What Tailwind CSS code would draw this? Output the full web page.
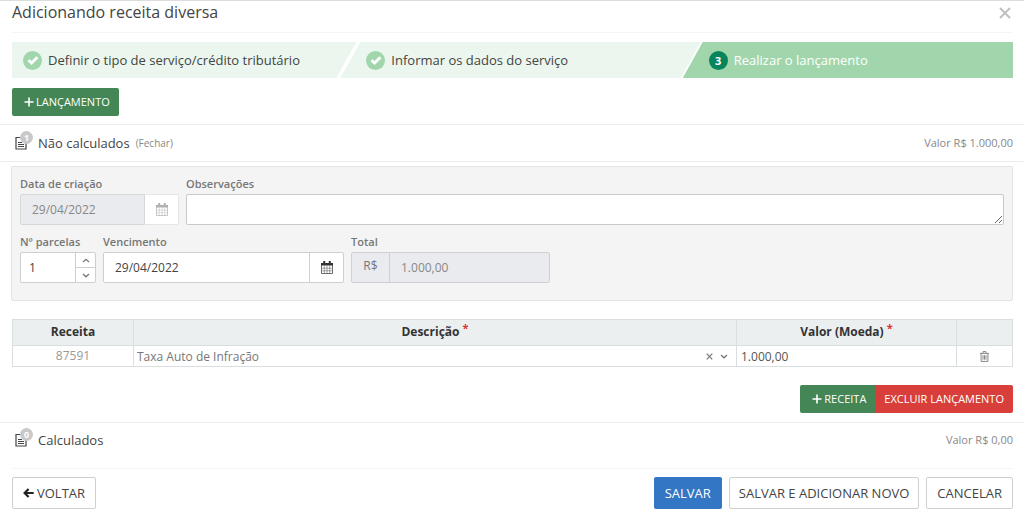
<!DOCTYPE html>
<html lang="pt-BR">
<head>
<meta charset="utf-8">
<meta name="viewport" content="width=device-width, initial-scale=1">
<title>Adicionando receita diversa</title>
<script src="https://cdn.jsdelivr.net/npm/@tailwindcss/browser@4"></script>
</head>
<body class="bg-white font-['Open_Sans',sans-serif] text-[13px] leading-5 text-[#444]">
<svg class="hidden" aria-hidden="true">
  <symbol id="check" viewBox="0 0 12 12"><path d="M1.5 6.2 4.6 9 10.4 3.2" fill="none" stroke="currentColor" stroke-width="3"/></symbol>
  <symbol id="plus" viewBox="0 0 10 10"><path d="M5 .5v9M.5 5h9" fill="none" stroke="currentColor" stroke-width="1.6"/></symbol>
  <symbol id="up" viewBox="0 0 8 5"><path d="M1 4 4 1.2 7 4" fill="none" stroke="currentColor" stroke-width="1.2"/></symbol>
  <symbol id="down" viewBox="0 0 8 5"><path d="M1 1 4 3.8 7 1" fill="none" stroke="currentColor" stroke-width="1.3"/></symbol>
  <symbol id="calendar" viewBox="0 0 12 13">
    <path d="M.5 3v9.5h11V3" fill="none" stroke="currentColor" stroke-width=".9" opacity=".8"/>
    <path d="M1 7.2h10M1 9.8h10M3.3 4.5v8M6 4.5v8M8.7 4.5v8" fill="none" stroke="currentColor" stroke-width=".7" opacity=".6"/>
    <path d="M0 2h12v2.4H0zM2.2 0h2v3h-2zM7.8 0h2v3h-2z" fill="currentColor"/>
  </symbol>
  <symbol id="doc" viewBox="0 0 12 14"><path d="M11 6.5V13H1V1.5h5" fill="none" stroke="currentColor" stroke-width="1.2"/><path d="M3 6.5h4M3 8.5h6M3 10.5h6" fill="none" stroke="currentColor"/></symbol>
</svg>
<main class="border-t border-[#dcdcdc]">
  <header class="mr-[11px] ml-3 flex h-[31px] items-start justify-between">
    <h1 class="text-base leading-[22px] text-[#444]">Adicionando receita diversa</h1>
    <button type="button" aria-label="Fechar janela" class="mt-[6px] mr-0.5 text-[#c0c0c0]"><svg class="size-3" viewBox="0 0 12 12"><path d="m1 1 10 10M11 1 1 11" stroke="currentColor" stroke-width="2"/></svg></button>
  </header>
  <ol class="mr-[11px] ml-3 flex border-t border-[#f5f5f5] pt-[9px] text-[13px]">
    <li class="flex h-9 basis-[34.4%] items-center gap-1.5 bg-[#ebf7ee] pl-[11px] [clip-path:polygon(0_0,100%_0,calc(100%_-_20px)_100%,0_100%)]">
      <span class="grid size-[19px] place-items-center rounded-full bg-[#a1d6ac] text-white"><svg class="size-3"><use href="#check"/></svg></span>Definir o tipo de serviço/crédito tributário</li>
    <li class="-ml-4 flex h-9 basis-[36%] items-center gap-1.5 bg-[#ebf7ee] pl-[26px] [clip-path:polygon(20px_0,100%_0,calc(100%_-_20px)_100%,0_100%)]">
      <span class="grid size-[19px] place-items-center rounded-full bg-[#a1d6ac] text-white"><svg class="size-3"><use href="#check"/></svg></span>Informar os dados do serviço</li>
    <li aria-current="step" class="-ml-[18px] flex h-9 flex-1 items-center gap-1.5 bg-[#a1d6ac] pl-[26px] text-white [clip-path:polygon(20px_0,100%_0,100%_100%,0_100%)]">
      <span class="grid size-[19px] place-items-center rounded-full bg-[#06845c] text-[11px] leading-none font-bold">3</span>Realizar o lançamento</li>
  </ol>
  <div class="px-3 pt-[10px] pb-2">
    <button type="button" class="flex h-7 items-center gap-0.5 rounded-xs bg-[#448655] pr-[9px] pl-3 text-[11px] text-white"><svg class="size-[10px]"><use href="#plus"/></svg>LANÇAMENTO</button>
  </div>
  <section>
    <div class="flex h-[38px] items-center border-y border-[#ececec] pr-[11px] pl-[15px]">
      <span class="relative mr-1.5 block h-4 w-[17px] text-[#444]">
        <svg class="mt-px h-3.5 w-3"><use href="#doc"/></svg>
        <span class="absolute -top-1 left-[5px] grid size-[13px] place-items-center rounded-full bg-[#c9c9c9] text-[9px] leading-none font-bold text-white">1</span>
      </span>
      <h2 class="text-[13px]">Não calculados</h2>
      <button type="button" class="ml-1.5 text-[10px] text-[#888]">(Fechar)</button>
      <span class="ml-auto text-[11px] text-[#888]">Valor R$ 1.000,00</span>
    </div>
    <form class="mt-1 mr-[11px] ml-[11px] rounded-xs border border-[#e3e3e3] bg-[#f4f4f4] px-2 pt-[7px] pb-[17px]">
      <div class="flex gap-[7px]">
        <div class="w-[159px]">
          <label for="criacao" class="block text-[11px] font-semibold text-[#777]">Data de criação</label>
          <div class="flex h-[31px]">
            <input id="criacao" disabled value="29/04/2022" class="w-[125px] rounded-l-xs border border-[#d5d7da] bg-[#eaebef] pl-[11px] text-xs text-[#888]">
            <button type="button" disabled aria-label="Abrir calendário" class="grid flex-1 place-items-center rounded-r-xs border border-l-0 border-[#e6e6e6] bg-white text-[#b0b0b0]"><svg class="h-[13px] w-3"><use href="#calendar"/></svg></button>
          </div>
        </div>
        <div class="flex-1">
          <label for="obs" class="block text-[11px] font-semibold text-[#777]">Observações</label>
          <textarea id="obs" class="block h-[31px] min-h-[31px] w-full rounded-xs border border-[#c9c9c9] bg-white px-3 py-1"></textarea>
        </div>
      </div>
      <div class="mt-[7px] flex gap-[7px]">
        <div class="w-[76px]">
          <label for="parcelas" class="block text-[11px] font-semibold text-[#777]">Nº parcelas</label>
          <div class="flex h-[31px] rounded-xs border border-[#cfcfcf] bg-white">
            <input id="parcelas" value="1" inputmode="numeric" class="w-[54px] pl-2 text-xs">
            <div class="flex flex-1 flex-col border-l border-[#cfcfcf] text-[#777]">
              <button type="button" aria-label="Aumentar" class="grid flex-1 place-items-center border-b border-[#cfcfcf]"><svg class="h-[5px] w-2"><use href="#up"/></svg></button>
              <button type="button" aria-label="Diminuir" class="grid flex-1 place-items-center"><svg class="h-[5px] w-2"><use href="#down"/></svg></button>
            </div>
          </div>
        </div>
        <div class="w-[241px]">
          <label for="vencimento" class="block text-[11px] font-semibold text-[#777]">Vencimento</label>
          <div class="flex h-[31px] rounded-xs border border-[#cfcfcf] bg-white">
            <input id="vencimento" value="29/04/2022" class="w-[205px] pl-[11px] text-xs">
            <button type="button" aria-label="Abrir calendário" class="grid flex-1 place-items-center border-l border-[#cfcfcf] text-[#333]"><svg class="h-[13px] w-3"><use href="#calendar"/></svg></button>
          </div>
        </div>
        <div class="w-[199px]">
          <label for="total" class="block text-[11px] font-semibold text-[#777]">Total</label>
          <div class="flex h-[31px] rounded-xs border border-[#cfd0d2] bg-[#eaebef]">
            <span class="w-[38px] border-r border-[#cfd0d2] pt-[3px] text-center text-xs leading-5 text-[#777]">R$</span>
            <input id="total" disabled value="1.000,00" class="w-full min-w-0 flex-1 pl-[11px] text-xs text-[#888]">
          </div>
        </div>
      </div>
    </form>
    <div class="mt-[18px] mr-[11px] ml-3">
      <table class="w-full table-fixed border-collapse border border-[#d9dfe1] text-xs">
        <thead class="bg-[#eceff0] text-[#333]">
          <tr class="h-[26px]">
            <th class="w-[121px] border border-[#d9dfe1] p-0 pb-0.5 font-bold">Receita</th>
            <th class="border border-[#d9dfe1] p-0 pb-0.5 font-bold">Descrição <sup class="top-[-4px] text-[11px] text-[#e03131]">*</sup></th>
            <th class="w-[220px] border border-[#d9dfe1] p-0 pb-0.5 font-bold">Valor (Moeda) <sup class="top-[-4px] text-[11px] text-[#e03131]">*</sup></th>
            <th class="w-[56px] border border-[#d9dfe1]" aria-label="Ações"></th>
          </tr>
        </thead>
        <tbody class="leading-[18px]">
          <tr class="h-[21px]">
            <td class="border border-[#d9dfe1] p-0 text-center text-[#999]">87591</td>
            <td class="border border-[#d9dfe1] p-0">
              <div class="flex items-center pr-2 pl-[3px] text-[#777]">
                <select aria-label="Descrição" class="h-5 flex-1 appearance-none pt-px"><option>Taxa Auto de Infração</option></select>
                <button type="button" aria-label="Limpar" class="mr-[7px]"><svg class="size-[7px]" viewBox="0 0 7 7"><path d="m.7.7 5.6 5.6M6.3.7.7 6.3" stroke="currentColor" stroke-width="1.2"/></svg></button>
                <svg class="h-[5px] w-2"><use href="#down"/></svg>
              </div>
            </td>
            <td class="border border-[#d9dfe1] p-0"><input aria-label="Valor (Moeda)" value="1.000,00" class="block h-5 w-full pl-1 text-[#555]"></td>
            <td class="border border-[#d9dfe1] p-0 text-center"><button type="button" aria-label="Excluir" class="block w-full text-[#888]"><svg class="mx-auto h-[11px] w-[9px]" viewBox="0 0 9 11"><path d="M0 2.4h9M3 2.2V.6h3v1.6M1.1 2.5v7.9h6.8V2.5M3 4.2v4.5M4.5 4.2v4.5M6 4.2v4.5" fill="none" stroke="currentColor"/></svg></button></td>
          </tr>
        </tbody>
      </table>
      <div class="mt-[18px] flex justify-end text-[11px] text-white">
        <button type="button" class="flex h-7 items-center gap-0.5 rounded-l-xs bg-[#448655] pr-[9px] pl-3"><svg class="size-[10px]"><use href="#plus"/></svg>RECEITA</button>
        <button type="button" class="h-7 rounded-r-xs bg-[#d93f3a] px-[9px]">EXCLUIR LANÇAMENTO</button>
      </div>
    </div>
  </section>
  <section class="mt-[9px] flex h-[38px] items-center border-t border-[#ececec] pr-[11px] pb-[3px] pl-[15px]">
    <span class="relative mr-1.5 block h-4 w-[17px] text-[#444]">
      <svg class="mt-px h-3.5 w-3"><use href="#doc"/></svg>
      <span class="absolute -top-1 left-[5px] grid size-[13px] place-items-center rounded-full bg-[#c9c9c9] text-[9px] leading-none font-bold text-white">0</span>
    </span>
    <h2 class="text-[13px]">Calculados</h2>
    <span class="ml-auto text-[11px] text-[#888]">Valor R$ 0,00</span>
  </section>
  <footer class="mt-2 mr-[11px] ml-3 flex gap-[7px] border-t border-[#f5f5f5] pt-2 text-[13px] text-[#444]">
    <button type="button" class="mr-auto flex h-8 items-center gap-[3px] rounded-xs border border-[#cfcfcf] px-[10px]"><svg class="h-[10px] w-[11px] text-[#222]" viewBox="0 0 11 10"><path d="M5.6 .9 1.6 5l4 4.1M2 5h8.7" fill="none" stroke="currentColor" stroke-width="2.2"/></svg>VOLTAR</button>
    <button type="button" class="h-8 rounded-xs bg-[#3276c4] px-[11px] font-medium text-white">SALVAR</button>
    <button type="button" class="h-8 rounded-xs border border-[#cfcfcf] px-[9px]">SALVAR E ADICIONAR NOVO</button>
    <button type="button" class="h-8 rounded-xs border border-[#cfcfcf] px-[10px]">CANCELAR</button>
  </footer>
</main>
</body>
</html>
